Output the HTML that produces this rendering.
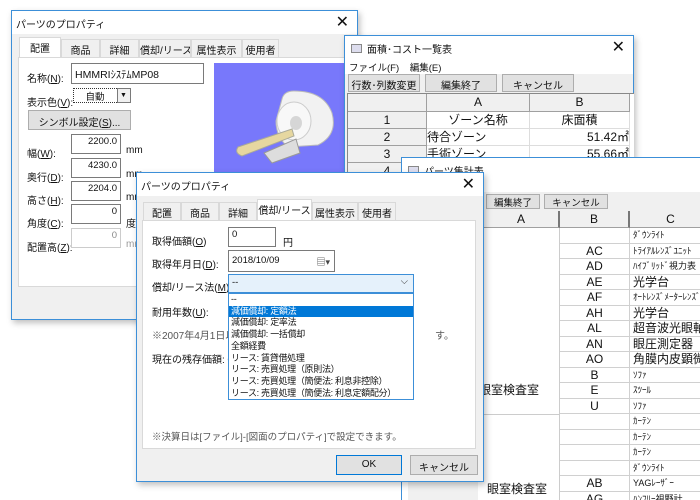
<!DOCTYPE html>
<html><head><meta charset="utf-8"><style>
*{box-sizing:border-box;margin:0;padding:0}
html,body{width:700px;height:500px;overflow:hidden}
body{position:relative;background:#fff;font-family:"Liberation Sans","Noto Sans CJK JP",sans-serif;font-size:10px;color:#111}
.a{position:absolute}
.win{position:absolute;background:#f0f0f0;border:1px solid #3c8fd8;box-shadow:2px 3px 6px rgba(0,0,0,.25)}
.tb{position:absolute;left:0;right:0;top:0;height:23px;background:#fff;font-size:10px;padding:5px 0 0 4px;white-space:nowrap}
.x{position:absolute;right:8px;top:1px;font-size:16px;font-weight:normal}
.tab{position:absolute;height:18px;border:1px solid #d9d9d9;border-bottom:none;background:#f0f0f0;text-align:center;font-size:10px;padding-top:2px;white-space:nowrap;overflow:hidden}
.tab.s{background:#fff;height:21px}
.panel{position:absolute;background:#fff;border:1px solid #d9d9d9}
.in{position:absolute;background:#fff;border:1px solid #7a7a7a;font-size:9.5px;padding:1px 3px;white-space:nowrap}
.btn{position:absolute;background:#e1e1e1;border:1px solid #adadad;text-align:center;font-size:10px;white-space:nowrap}
.c{position:absolute;border-right:1px solid #a0a0a0;border-bottom:1px solid #a0a0a0;text-align:center;font-size:12px;line-height:16px;overflow:hidden;white-space:nowrap}
.h{background:#f0f0f0}
.g{position:absolute;border-bottom:1px solid #d0d0d0;border-right:1px solid #d0d0d0;white-space:nowrap;overflow:hidden;background:#fff}
u{text-decoration:underline}
.l{position:absolute;font-size:10px;white-space:nowrap}
</style></head><body>

<!-- Window 1 -->
<div class="win" style="left:11px;top:10px;width:347px;height:310px">
 <div class="tb">パーツのプロパティ<span class="x">✕</span></div>
 <div class="tab s" style="left:7px;top:26px;width:42px">配置</div>
 <div class="tab" style="left:49px;top:28px;width:39px">商品</div>
 <div class="tab" style="left:88px;top:28px;width:39px">詳細</div>
 <div class="tab" style="left:127px;top:28px;width:52px">償却/リース</div>
 <div class="tab" style="left:179px;top:28px;width:51px">属性表示</div>
 <div class="tab" style="left:230px;top:28px;width:37px">使用者</div>
 <div class="panel" style="left:6px;top:46px;width:336px;height:230px"></div>
 <div class="l" style="left:15px;top:59px">名称(<u>N</u>):</div>
 <div class="in" style="left:59px;top:52px;width:133px;height:21px;font-size:10.5px;padding-top:3px">HMMRIｼｽﾃﾑMP08</div>
 <div class="l" style="left:15px;top:83px">表示色(<u>V</u>):</div>
 <div class="in" style="left:61px;top:77px;width:58px;height:15px;border:1px dotted #333;text-align:center;padding:0 14px 0 0">自動</div>
 <div class="in" style="left:105px;top:77px;width:14px;height:15px;background:#f0f0f0;font-size:7px;padding:3px 2px">▼</div>
 <div class="btn" style="left:16px;top:99px;width:103px;height:20px;padding-top:3px">シンボル設定(<u>S</u>)...</div>
 <div class="l" style="left:15px;top:134px">幅(<u>W</u>):</div>
 <div class="in" style="left:59px;top:123px;width:50px;height:20px;text-align:right">2200.0</div><div class="l" style="left:114px;top:134px">mm</div>
 <div class="l" style="left:15px;top:158px">奥行(<u>D</u>):</div>
 <div class="in" style="left:59px;top:147px;width:50px;height:20px;text-align:right">4230.0</div><div class="l" style="left:114px;top:158px">mm</div>
 <div class="l" style="left:15px;top:181px">高さ(<u>H</u>):</div>
 <div class="in" style="left:59px;top:170px;width:50px;height:20px;text-align:right">2204.0</div><div class="l" style="left:114px;top:181px">mm</div>
 <div class="l" style="left:15px;top:204px">角度(<u>C</u>):</div>
 <div class="in" style="left:59px;top:193px;width:50px;height:20px;text-align:right">0</div><div class="l" style="left:114px;top:204px">度</div>
 <div class="l" style="left:15px;top:228px">配置高(<u>Z</u>):</div>
 <div class="in" style="left:59px;top:217px;width:50px;height:20px;text-align:right;border-color:#ccc;color:#888">0</div><div class="l" style="left:114px;top:228px;color:#999">mm</div>
 <div class="a" style="left:202px;top:52px;width:140px;height:120px;background:#7878fb">
  <svg width="140" height="120" viewBox="0 0 140 120">
   <path d="M68 36 Q70 28 80 28 Q110 28 118 50 Q124 72 104 82 L74 84 Q62 74 62 58 Z" fill="#f2f2f2" stroke="#bbb"/>
   <ellipse cx="80" cy="58" rx="17" ry="19" fill="#f8f8f8" stroke="#ccc"/>
   <ellipse cx="82" cy="60" rx="6" ry="7" fill="#d6d6d6"/>
   <path d="M24 84 L78 66 L80 73 L28 93 Q20 90 24 84Z" fill="#e6d7a0" stroke="#aa9"/>
   <path d="M50 90 L82 76 L86 90 L58 100Z" fill="#ddd" stroke="#999"/>
  </svg>
 </div>
</div>

<!-- Window 2 -->
<div class="win" style="left:344px;top:35px;width:290px;height:160px;background:#f0f0f0">
 <div class="tb" style="padding-left:22px">面積･コスト一覧表<span class="x">✕</span></div>
 <div class="a" style="left:6px;top:8px;width:11px;height:9px;border:1px solid #888;background:#dde"></div>
 <div class="a" style="left:0;right:0;top:23px;height:15px;background:#fff;font-size:9.5px;padding:1px 4px">ファイル(F)&nbsp;&nbsp;&nbsp;&nbsp;編集(E)</div>
 <div class="btn" style="left:3px;top:38px;width:72px;height:18px;padding-top:2px">行数･列数変更</div>
 <div class="btn" style="left:80px;top:38px;width:72px;height:18px;padding-top:2px">編集終了</div>
 <div class="btn" style="left:157px;top:38px;width:72px;height:18px;padding-top:2px">キャンセル</div>
 <div class="a" style="left:2px;top:57px;width:287px;height:100px;background:#fff;border-top:1px solid #888;border-left:1px solid #888"></div>
 <div class="c h" style="left:3px;top:58px;width:79px;height:18px"></div>
 <div class="c h" style="left:82px;top:58px;width:103px;height:18px">A</div>
 <div class="c h" style="left:185px;top:58px;width:100px;height:18px">B</div>
 <div class="c h" style="left:3px;top:76px;width:79px;height:17px">1</div>
 <div class="c" style="left:82px;top:76px;width:103px;height:17px;border-color:#ddd">ゾーン名称</div>
 <div class="c" style="left:185px;top:76px;width:100px;height:17px;border-color:#ddd">床面積</div>
 <div class="c h" style="left:3px;top:93px;width:79px;height:17px">2</div>
 <div class="c" style="left:82px;top:93px;width:103px;height:17px;text-align:left;border-color:#ddd">待合ゾーン</div>
 <div class="c" style="left:185px;top:93px;width:100px;height:17px;text-align:right;border-color:#ddd">51.42㎡</div>
 <div class="c h" style="left:3px;top:110px;width:79px;height:17px">3</div>
 <div class="c" style="left:82px;top:110px;width:103px;height:17px;text-align:left;border-color:#ddd">手術ゾーン</div>
 <div class="c" style="left:185px;top:110px;width:100px;height:17px;text-align:right;border-color:#ddd">55.66㎡</div>
 <div class="c h" style="left:3px;top:127px;width:79px;height:17px">4</div>
</div>

<!-- Window 3 -->
<div class="win" style="left:401px;top:157px;width:299px;height:343px;background:#fff;overflow:hidden;border-right:none;border-bottom:none;box-shadow:none">
 <div class="tb" style="padding-left:22px">パーツ集計表</div>
 <div class="a" style="left:6px;top:8px;width:11px;height:9px;border:1px solid #888;background:#dde"></div>
 <div class="a" style="left:0;right:0;top:34px;height:19px;background:#f0f0f0"></div>
 <div class="btn" style="left:84px;top:36px;width:54px;height:15px;font-size:9.5px">編集終了</div>
 <div class="btn" style="left:142px;top:36px;width:64px;height:15px;font-size:9.5px">キャンセル</div>
 <div class="c h" style="left:0;top:53px;width:82px;height:17px;border-right:2px solid #777"></div>
 <div class="c h" style="left:82px;top:53px;width:76px;height:17px;border-right:2px solid #777">A</div>
 <div class="c h" style="left:158px;top:53px;width:70px;height:17px;border-right:2px solid #777">B</div>
 <div class="c h" style="left:228px;top:53px;width:82px;height:17px">C</div>
 <div class="a" style="left:82px;top:70px;width:76px;height:273px;border-right:1px solid #ccc"></div>
 <div class="a" style="left:82px;top:256px;width:76px;border-top:1px solid #ccc"></div>
 <div class="l" style="left:77px;top:223px;font-size:12px">眼室検査室</div>
 <div class="a" style="left:6px;top:290px;width:70px;height:53px;background:#f0f0f0"></div>
 <div class="c h" style="left:6px;top:294px;width:69px;height:15px;font-size:12px;line-height:13px">100</div>
 <div class="c h" style="left:6px;top:309px;width:69px;height:15px;font-size:12px;line-height:13px">101</div>
 <div class="l" style="left:85px;top:322px;font-size:12px">眼室検査室</div>
 <div id="rows"></div>
</div>

<!-- Window 4 -->
<div class="win" style="left:136px;top:172px;width:348px;height:310px">
 <div class="tb">パーツのプロパティ<span class="x">✕</span></div>
 <div class="tab" style="left:6px;top:29px;width:38px">配置</div>
 <div class="tab" style="left:44px;top:29px;width:38px">商品</div>
 <div class="tab" style="left:82px;top:29px;width:38px">詳細</div>
 <div class="tab s" style="left:120px;top:26px;width:55px">償却/リース</div>
 <div class="tab" style="left:175px;top:29px;width:46px">属性表示</div>
 <div class="tab" style="left:221px;top:29px;width:38px">使用者</div>
 <div class="panel" style="left:5px;top:47px;width:334px;height:229px"></div>
 <div class="l" style="left:15px;top:60px">取得価額(<u>O</u>)</div>
 <div class="in" style="left:91px;top:54px;width:48px;height:20px">0</div><div class="l" style="left:146px;top:61px">円</div>
 <div class="l" style="left:15px;top:83px">取得年月日(<u>D</u>):</div>
 <div class="in" style="left:91px;top:77px;width:107px;height:22px;padding-top:4px">2018/10/09<span style="position:absolute;right:4px;top:4px;font-size:9px;color:#444">▤▾</span></div>
 <div class="l" style="left:15px;top:106px">償却/リース法(<u>M</u>)</div>
 <div class="in" style="left:91px;top:101px;width:186px;height:19px;background:#e5f1fb;border-color:#3c8fd8;padding-top:2px">--<span style="position:absolute;right:5px;top:1px;color:#444">⌵</span></div>
 <div class="l" style="left:15px;top:131px">耐用年数(<u>U</u>):</div>
 <div class="l" style="left:15px;top:154px;color:#555">※2007年4月1日以</div>
 <div class="l" style="left:298px;top:154px;color:#555">す。</div>
 <div class="l" style="left:15px;top:178px">現在の残存価額: 0</div>
 <div class="l" style="left:15px;top:256px;color:#555;font-size:9.5px">※決算日は[ファイル]-[図面のプロパティ]で設定できます。</div>
 <div class="btn" style="left:199px;top:282px;width:66px;height:20px;border:1px solid #0078d7;padding-top:3px">OK</div>
 <div class="btn" style="left:273px;top:282px;width:68px;height:20px;padding-top:3px">キャンセル</div>
 <div class="a" style="left:91px;top:120px;width:186px;height:107px;background:#fff;border:1px solid #3c8fd8;font-size:9px;line-height:11.7px;white-space:nowrap;overflow:hidden;letter-spacing:-0.3px">
  <div style="padding-left:2px">--</div>
  <div style="padding-left:2px;background:#0078d7;color:#fff">減価償却: 定額法</div>
  <div style="padding-left:2px">減価償却: 定率法</div>
  <div style="padding-left:2px">減価償却: 一括償却</div>
  <div style="padding-left:2px">全額経費</div>
  <div style="padding-left:2px">リース: 賃貸借処理</div>
  <div style="padding-left:2px">リース: 売買処理（原則法）</div>
  <div style="padding-left:2px">リース: 売買処理（簡便法: 利息非控除）</div>
  <div style="padding-left:2px">リース: 売買処理（簡便法: 利息定額配分）</div>
 </div>
</div>

<script>
var b=["","AC","AD","AE","AF","AH","AL","AN","AO","B","E","U","","","","","AB","AG"];
var c=["ﾀﾞｳﾝﾗｲﾄ","ﾄﾗｲｱﾙﾚﾝｽﾞﾕﾆｯﾄ","ﾊｲﾌﾞﾘｯﾄﾞ視力表","光学台","ｵｰﾄﾚﾝｽﾞﾒｰﾀｰﾚﾝｽﾞ","光学台","超音波光眼軸長","眼圧測定器","角膜内皮顕微鏡","ｿﾌｧ","ｽﾂｰﾙ","ｿﾌｧ","ｶｰﾃﾝ","ｶｰﾃﾝ","ｶｰﾃﾝ","ﾀﾞｳﾝﾗｲﾄ","YAGﾚｰｻﾞｰ","ﾊﾝﾌﾘｰ視野計"];
var h="";
for(var i=0;i<b.length;i++){var t=Math.round(70+i*15.5),n=Math.round(70+(i+1)*15.5),hh=n-t;
if(t>=343)break;
var big=/[光超眼角]/.test(c[i]);
h+='<div class="g" style="left:158px;top:'+t+'px;width:70px;height:'+hh+'px;line-height:'+(hh-1)+'px;text-align:center;font-size:12px">'+b[i]+'</div>';
h+='<div class="g" style="left:228px;top:'+t+'px;width:82px;height:'+hh+'px;line-height:'+(hh-1)+'px;padding-left:3px;font-size:'+(big?'12px':'9px')+'">'+c[i]+'</div>';}
document.getElementById("rows").outerHTML=h;
</script>
</body></html>
